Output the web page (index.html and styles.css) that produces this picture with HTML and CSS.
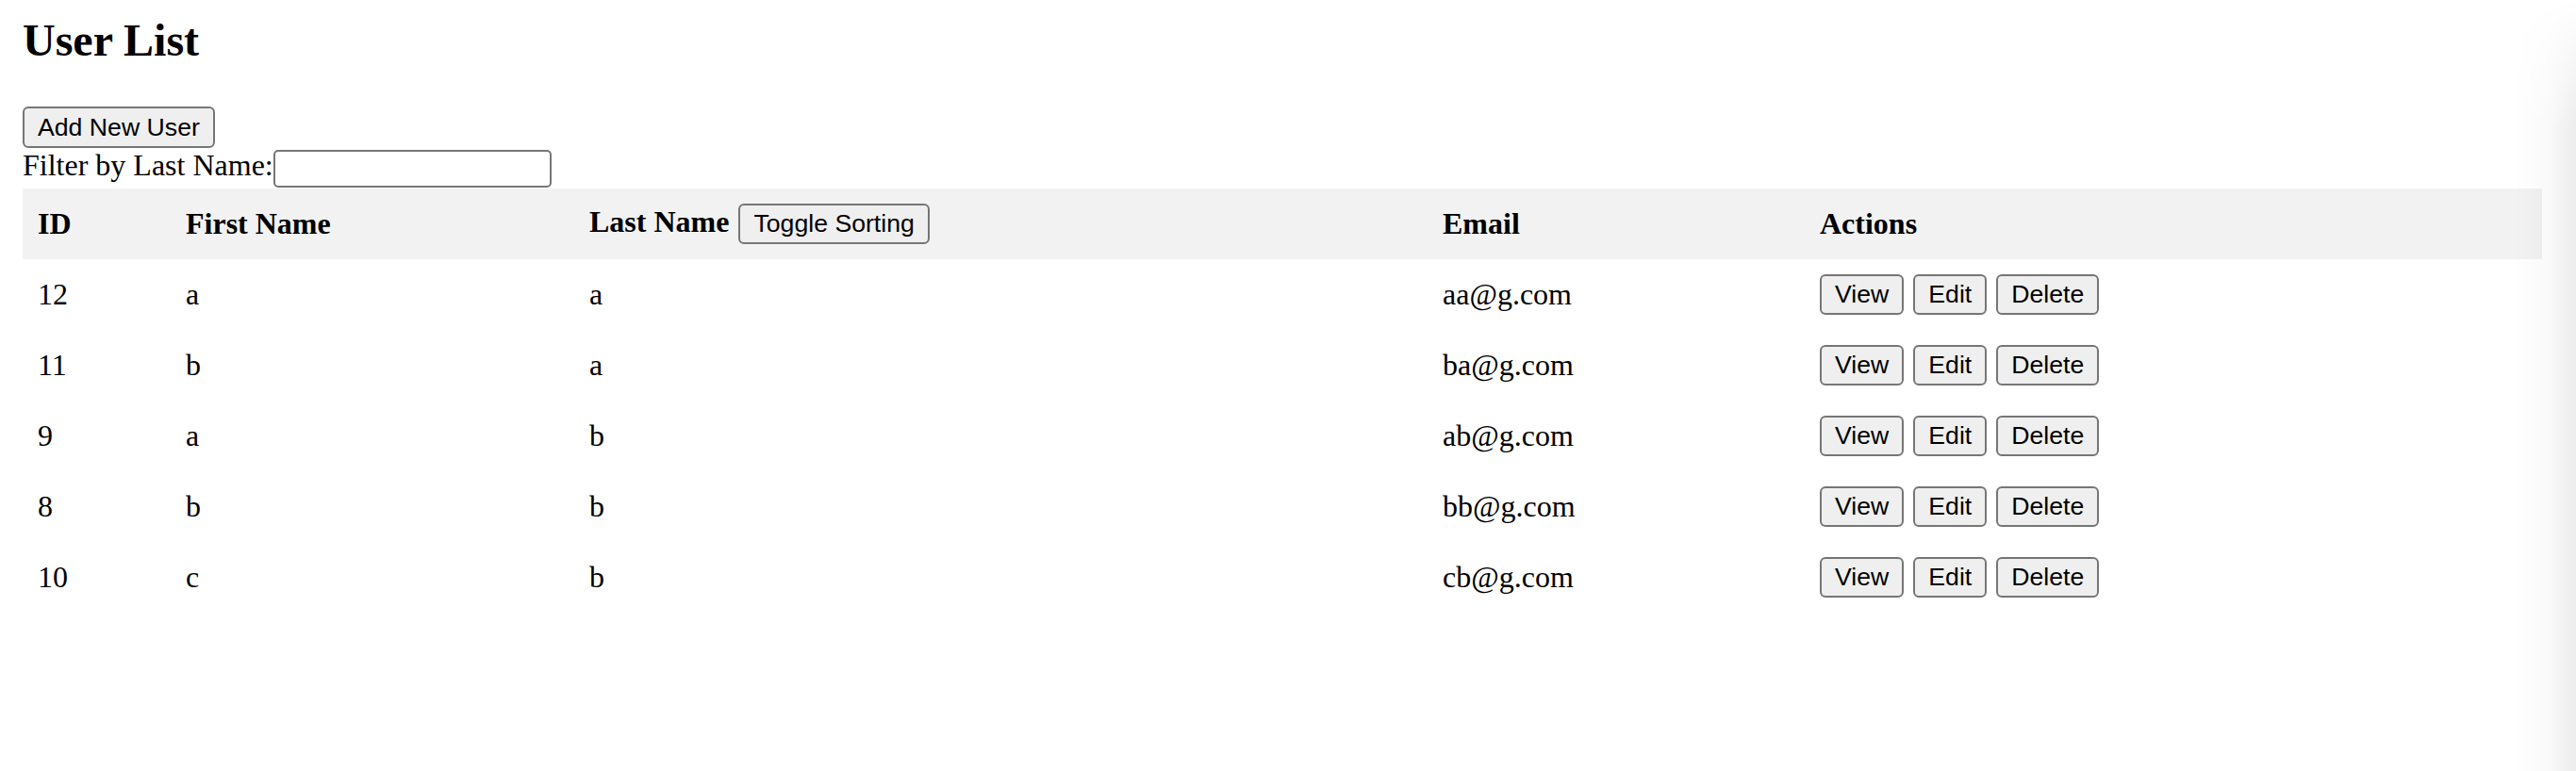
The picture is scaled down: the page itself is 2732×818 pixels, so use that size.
FILE: index.html
```html
<!DOCTYPE html>
<html lang="en">
<head>
<meta charset="utf-8">
<title>User List</title>
<link rel="stylesheet" href="styles.css">
</head>
<body>
<div class="page">
  <h1 class="title">User List</h1>
  <div class="toolbar">
    <button class="btn" type="button">Add New User</button>
  </div>
  <div class="filter">
    <label class="filter-label" for="lastNameFilter">Filter by Last Name:</label><input class="filter-input" id="lastNameFilter" type="text">
  </div>
  <table class="users">
    <colgroup>
      <col class="col-id">
      <col class="col-first">
      <col class="col-last">
      <col class="col-email">
      <col class="col-actions">
    </colgroup>
    <thead>
      <tr class="row">
        <th>ID</th>
        <th>First Name</th>
        <th>Last Name <button class="btn sort-btn" type="button">Toggle Sorting</button></th>
        <th>Email</th>
        <th>Actions</th>
      </tr>
    </thead>
    <tbody>
      <tr class="row">
        <td>12</td><td>a</td><td>a</td><td>aa@g.com</td>
        <td><div class="actions"><button class="btn" type="button">View</button><button class="btn" type="button">Edit</button><button class="btn" type="button">Delete</button></div></td>
      </tr>
      <tr class="row">
        <td>11</td><td>b</td><td>a</td><td>ba@g.com</td>
        <td><div class="actions"><button class="btn" type="button">View</button><button class="btn" type="button">Edit</button><button class="btn" type="button">Delete</button></div></td>
      </tr>
      <tr class="row">
        <td>9</td><td>a</td><td>b</td><td>ab@g.com</td>
        <td><div class="actions"><button class="btn" type="button">View</button><button class="btn" type="button">Edit</button><button class="btn" type="button">Delete</button></div></td>
      </tr>
      <tr class="row">
        <td>8</td><td>b</td><td>b</td><td>bb@g.com</td>
        <td><div class="actions"><button class="btn" type="button">View</button><button class="btn" type="button">Edit</button><button class="btn" type="button">Delete</button></div></td>
      </tr>
      <tr class="row">
        <td>10</td><td>c</td><td>b</td><td>cb@g.com</td>
        <td><div class="actions"><button class="btn" type="button">View</button><button class="btn" type="button">Edit</button><button class="btn" type="button">Delete</button></div></td>
      </tr>
    </tbody>
  </table>
</div>
</body>
</html>
```
FILE: styles.css
```css
html, body {
  margin: 0;
  padding: 0;
  background: #ffffff;
}

body {
  font-family: "Liberation Serif", "Times New Roman", serif;
  font-size: 32px;
  color: #000000;
  min-height: 818px;
}

body::after {
  content: "";
  position: fixed;
  top: 0;
  right: 0;
  bottom: 0;
  width: 64px;
  pointer-events: none;
  background: linear-gradient(to right, rgba(0, 0, 0, 0) 0%, rgba(0, 0, 0, 0.025) 55%, rgba(0, 0, 0, 0.075) 100%);
  -webkit-mask-image: linear-gradient(to bottom, rgba(0, 0, 0, 0) 0px, rgba(0, 0, 0, 1) 140px);
  mask-image: linear-gradient(to bottom, rgba(0, 0, 0, 0) 0px, rgba(0, 0, 0, 1) 140px);
}

.page {
  padding: 15px 36px 0 24px;
}

.title {
  font-size: 48px;
  font-weight: bold;
  line-height: 56px;
  margin: 0 0 42px 0;
}

.toolbar {
  display: flex;
}

.btn {
  font-family: "Liberation Sans", Arial, sans-serif;
  font-size: 26.67px;
  line-height: 31px;
  color: #000000;
  background: #efefef;
  border: 2px solid #767676;
  border-radius: 6px;
  padding: 4px 14px;
  margin: 0;
}

.toolbar .btn {
  line-height: 32px;
}

.filter {
  display: flex;
  align-items: flex-start;
  height: 43px;
}

.filter-label {
  line-height: normal;
}

.filter-input {
  box-sizing: border-box;
  width: 295px;
  height: 40px;
  margin: 2px 0 0 0;
  padding: 2px 4px;
  font-family: "Liberation Sans", Arial, sans-serif;
  font-size: 26.67px;
  border: 2px solid #767676;
  border-radius: 5px;
  background: #ffffff;
}

.users {
  width: 100%;
  border-collapse: collapse;
  table-layout: fixed;
}

.col-id { width: 157px; }
.col-first { width: 428px; }
.col-last { width: 905px; }
.col-email { width: 400px; }
.col-actions { width: auto; }

.users th,
.users td {
  padding: 16px;
  text-align: left;
  vertical-align: middle;
}

.users th {
  background: #f2f2f2;
  font-weight: bold;
}

.row {
  height: 75px;
}

.sort-btn {
  margin-left: 2px;
}

.actions {
  display: flex;
  gap: 10px;
}
```
